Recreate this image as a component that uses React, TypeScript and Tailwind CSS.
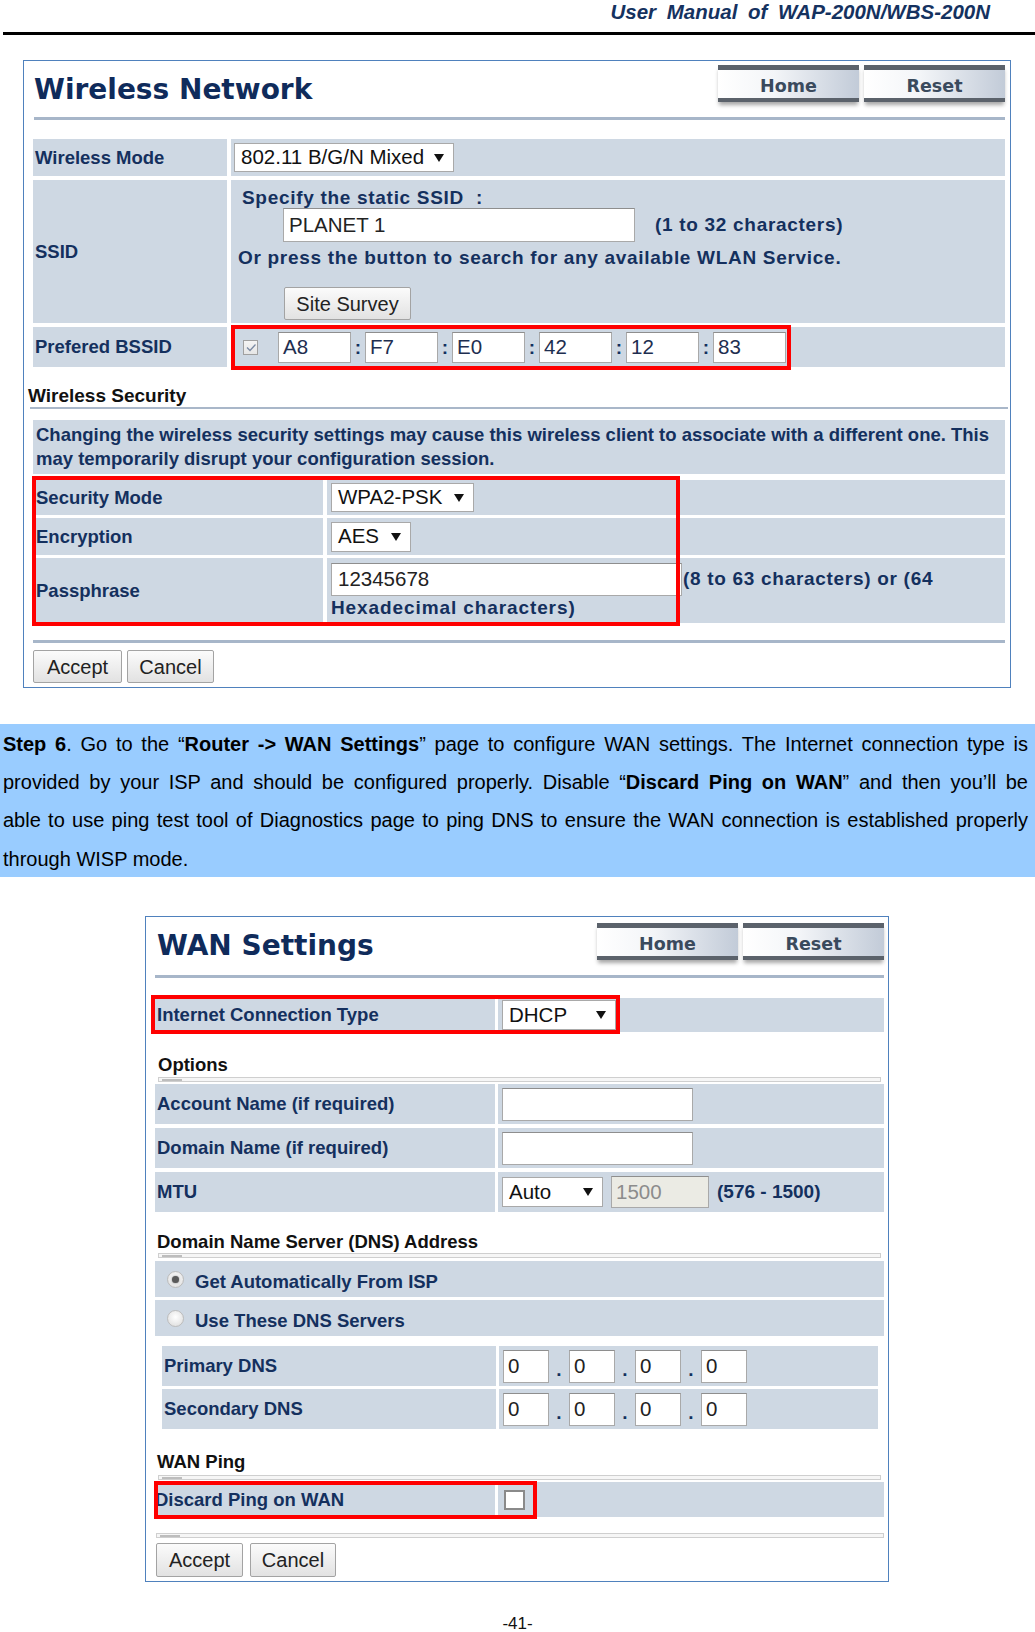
import React, { Fragment } from "react";

const LBL = "font-bold text-[18.5px] text-[#14305e] whitespace-nowrap";
const ROW = "bg-[#ced8e3]";
const INFO = "font-bold text-[19px] tracking-[0.7px] text-[#14305e] whitespace-nowrap";
const HEAD = "font-bold text-[18.5px] leading-[20px] h-[20px] text-[#111] whitespace-nowrap";

function Arrow() {
  return (
    <svg width="10" height="8" viewBox="0 0 10 8" className="shrink-0">
      <polygon points="0,0 10,0 5,8" fill="#111" />
    </svg>
  );
}

function Select({ cls, text }: { cls: string; text: string }) {
  return (
    <div
      className={`${cls} flex items-center justify-between border border-[#a9a9a9] bg-white pl-[6px] pr-[9px] text-[20.5px] leading-none text-[#111]`}
    >
      <span>{text}</span>
      <Arrow />
    </div>
  );
}

function Box({ cls, text, tone }: { cls: string; text?: string; tone?: string }) {
  return (
    <div
      className={`${cls} flex items-center border border-[#a9a9a9] border-t-[#8e8e8e] pl-[4px] text-[20.5px] leading-none whitespace-nowrap ${tone ?? "bg-white text-[#1e2e50]"}`}
    >
      {text}
    </div>
  );
}

function Btn({ cls, text }: { cls: string; text: string }) {
  return (
    <div
      className={`${cls} flex items-center justify-center rounded-[2px] border border-[#a3a3a3] bg-[linear-gradient(#fbfbfb,#e2e2e2)] text-[20px] leading-none text-[#222]`}
    >
      {text}
    </div>
  );
}

function NavBtn({ text }: { text: string }) {
  return (
    <div className="flex h-[37px] w-[141px] flex-col shadow-[0_4px_4px_-1px_rgba(0,0,0,0.35)]">
      <div className="h-[5px] bg-[#5b626b]" />
      <div className="flex-1 bg-[linear-gradient(to_right,#ffffff_0%,#f3f5f8_40%,#c2cbd8_100%)] pt-[5px] text-center font-['DejaVu_Sans',sans-serif] text-[17.5px] font-bold leading-[22px] text-[#3a4a5d]">
        {text}
      </div>
      <div className="h-[4px] bg-[#5b626b]" />
    </div>
  );
}

function Header({ title, tcls }: { title: string; tcls: string }) {
  return (
    <div className="flex h-[37px] justify-between">
      <div
        className={`${tcls} font-['DejaVu_Sans',sans-serif] text-[28px] font-bold leading-[28px] text-[#0f2b5b] whitespace-nowrap`}
      >
        {title}
      </div>
      <div className="flex gap-[5px]">
        <NavBtn text="Home" />
        <NavBtn text="Reset" />
      </div>
    </div>
  );
}

function Check({ checked }: { checked?: boolean }) {
  return (
    <div className="flex h-[15px] w-[15px] items-center justify-center border border-[#a0a0a0] bg-[linear-gradient(#f4f4f4,#e6e6e6)]">
      {checked && (
        <svg width="12" height="11" viewBox="0 0 12 11">
          <path d="M2 5.5 L5 8.5 L10.5 2.5" fill="none" stroke="#7b8aa3" strokeWidth="1.3" />
        </svg>
      )}
    </div>
  );
}

function Radio({ on }: { on?: boolean }) {
  return (
    <div className="flex h-[17px] w-[17px] shrink-0 items-center justify-center rounded-full border border-[#bcbcbc] bg-[radial-gradient(circle_at_50%_40%,#ffffff,#dadada)]">
      {on && <div className="h-[7px] w-[7px] rounded-full bg-[#5a5a5a] shadow-[0_0_2px_#777]" />}
    </div>
  );
}

function Groove({ cls }: { cls: string }) {
  return (
    <div className={`${cls} flex h-[5px] items-end border border-[#cfcfcf] bg-[#f6f6f6] pl-[3px]`}>
      <div className="h-[2px] w-[20px] bg-[#bdbdbd]" />
    </div>
  );
}

function Red({ cls }: { cls: string }) {
  return <div className={`${cls} pointer-events-none absolute border-[4px] border-[#ff0000]`} />;
}

function WirelessPanel() {
  const mac = ["A8", "F7", "E0", "42", "12", "83"];
  return (
    <div className="ml-[23px] mt-[25px] flex w-[988px] flex-col border border-[#4f81bd] pb-[4px] pl-[9px] pr-[5px] pt-[4px]">
      <Header title="Wireless Network" tcls="ml-[1px] mt-[11px]" />
      <div className="ml-[1px] mt-[15px] h-[3px] bg-[#a7b6c9]" />

      {/* Wireless Mode */}
      <div className="mt-[19px] flex h-[37px] gap-[4px]">
        <div className={`${ROW} flex w-[194px] items-center pl-[2px] ${LBL}`}>Wireless Mode</div>
        <div className={`${ROW} flex flex-1 items-center pl-[3px]`}>
          <Select cls="w-[220px] h-[29px]" text="802.11 B/G/N Mixed" />
        </div>
      </div>

      {/* SSID */}
      <div className="mt-[4px] flex h-[143px] gap-[4px]">
        <div className={`${ROW} flex w-[194px] items-center pl-[2px] ${LBL}`}>SSID</div>
        <div className={`${ROW} flex flex-1 flex-col pt-[9px]`}>
          <div className={`pl-[11px] leading-[18px] ${INFO}`}>Specify the static SSID&nbsp; :</div>
          <div className="mt-[1px] flex h-[34px] items-center pl-[52px]">
            <Box cls="w-[352px] h-[34px] pl-[5px]" text="PLANET 1" tone="bg-white text-[#222]" />
            <div className={`ml-[20px] ${INFO}`}>(1 to 32 characters)</div>
          </div>
          <div className={`mt-[7px] pl-[7px] leading-[18px] ${INFO}`}>
            Or press the button to search for any available WLAN Service.
          </div>
          <div className="mt-[20px] pl-[53px]">
            <Btn cls="w-[127px] h-[33px]" text="Site Survey" />
          </div>
        </div>
      </div>

      {/* BSSID */}
      <div className="mt-[4px] flex h-[40px] gap-[4px]">
        <div className={`${ROW} flex w-[194px] items-center pl-[2px] ${LBL}`}>Prefered BSSID</div>
        <div className={`${ROW} relative flex flex-1 items-center pl-[12px]`}>
          <Check checked />
          <div className="ml-[20px] flex items-center">
            {mac.map((m, i) => (
              <Fragment key={m}>
                {i > 0 && (
                  <span className="w-[14px] text-center text-[19px] font-bold leading-none text-[#14305e]">:</span>
                )}
                <Box cls="w-[73px] h-[31px] pl-[4px]" text={m} />
              </Fragment>
            ))}
          </div>
          <Red cls="left-[0px] top-[-2px] w-[560px] h-[45px]" />
        </div>
      </div>

      {/* Wireless Security */}
      <div className={`-ml-[5px] mt-[19px] text-[19px] ${HEAD}`}>Wireless Security</div>
      <div className="-ml-[3px] -mr-[3px] mt-[1px] h-[2px] bg-[#a9b7c9]" />
      <div className={`${ROW} mt-[11px] h-[54px] pl-[3px] pt-[3px] text-[18.5px] font-bold leading-[24px] text-[#14305e]`}>
        <div className="whitespace-nowrap">
          Changing the wireless security settings may cause this wireless client to associate with a different one. This
        </div>
        <div className="whitespace-nowrap">may temporarily disrupt your configuration session.</div>
      </div>

      <div className="relative mt-[6px] flex flex-col gap-[3px]">
        <div className="flex h-[35px] gap-[4px]">
          <div className={`${ROW} flex w-[290px] items-center pl-[3px] ${LBL}`}>Security Mode</div>
          <div className={`${ROW} flex flex-1 items-center pl-[4px]`}>
            <Select cls="w-[143px] h-[29px]" text="WPA2-PSK" />
          </div>
        </div>
        <div className="flex h-[37px] gap-[4px]">
          <div className={`${ROW} flex w-[290px] items-center pl-[3px] ${LBL}`}>Encryption</div>
          <div className={`${ROW} flex flex-1 items-center pl-[4px]`}>
            <Select cls="w-[80px] h-[30px]" text="AES" />
          </div>
        </div>
        <div className="flex h-[65px] gap-[4px]">
          <div className={`${ROW} flex w-[290px] items-center pl-[3px] ${LBL}`}>Passphrase</div>
          <div className={`${ROW} flex flex-1 flex-col pl-[4px] pt-[5px]`}>
            <div className="flex h-[33px] items-center">
              <Box cls="w-[351px] h-[33px] pl-[6px]" text="12345678" tone="bg-white text-[#222]" />
              <div className={`ml-[1px] ${INFO} tracking-[0.4px]`}>(8 to 63 characters) or (64</div>
            </div>
            <div className={`mt-[2px] leading-[20px] ${INFO} tracking-[0.9px]`}>Hexadecimal characters)</div>
          </div>
        </div>
        <Red cls="left-[-1px] top-[-4px] w-[648px] h-[150px]" />
      </div>

      <div className="mt-[17px] h-[3px] bg-[#a7b6c9]" />
      <div className="mt-[7px] flex gap-[5px]">
        <Btn cls="w-[89px] h-[33px]" text="Accept" />
        <Btn cls="w-[87px] h-[33px]" text="Cancel" />
      </div>
    </div>
  );
}

function WanRow({ label, h, children, cls }: { label: string; h: string; children?: React.ReactNode; cls: string }) {
  return (
    <div className={`${cls} ${h} flex gap-[3px]`}>
      <div className={`${ROW} flex w-[340px] items-center pl-[2px] ${LBL}`}>{label}</div>
      <div className={`${ROW} relative flex flex-1 items-center`}>{children}</div>
    </div>
  );
}

function DnsRow({ label, cls }: { label: string; cls: string }) {
  return (
    <div className={`${cls} ml-[7px] mr-[6px] flex h-[40px] gap-[3px]`}>
      <div className={`${ROW} flex w-[334px] items-center pl-[2px] ${LBL}`}>{label}</div>
      <div className={`${ROW} flex flex-1 items-center pl-[4px]`}>
        {[0, 1, 2, 3].map((i) => (
          <Fragment key={i}>
            {i > 0 && (
              <span className="flex h-[33px] w-[20px] items-end justify-center pb-[4px] text-[19px] font-bold leading-none text-[#14305e]">
                .
              </span>
            )}
            <Box cls="w-[46px] h-[33px] pl-[2px]" text="0" tone="bg-white text-[#222]" />
          </Fragment>
        ))}
      </div>
    </div>
  );
}

function WanPanel() {
  return (
    <div className="ml-[145px] mt-[39px] flex w-[744px] flex-col border border-[#4f81bd] pb-[4px] pl-[9px] pr-[4px] pt-[6px]">
      <Header title="WAN Settings" tcls="ml-[2px] mt-[9px]" />
      <div className="mt-[15px] h-[3px] bg-[#a7b6c9]" />

      <WanRow cls="mt-[20px] relative" h="h-[34px]" label="Internet Connection Type">
        <div className="pl-[4px]">
          <Select cls="w-[114px] h-[30px]" text="DHCP" />
        </div>
      </WanRow>

      <div className="relative">
        <Red cls="left-[-4px] top-[-37px] w-[469px] h-[39px]" />
      </div>

      <div className={`ml-[3px] mt-[23px] ${HEAD}`}>Options</div>
      <Groove cls="ml-[3px] mr-[3px] mt-[2px]" />

      <WanRow cls="mt-[2px]" h="h-[40px]" label="Account Name (if required)">
        <div className="pl-[4px]">
          <Box cls="w-[191px] h-[33px]" />
        </div>
      </WanRow>
      <WanRow cls="mt-[4px]" h="h-[40px]" label="Domain Name (if required)">
        <div className="pl-[4px]">
          <Box cls="w-[191px] h-[33px]" />
        </div>
      </WanRow>
      <WanRow cls="mt-[4px]" h="h-[40px]" label="MTU">
        <div className="flex items-center pl-[4px]">
          <Select cls="w-[101px] h-[30px]" text="Auto" />
          <Box cls="ml-[8px] w-[98px] h-[32px] pl-[2px]" text="1500" tone="bg-[#ebebe4] text-[#8c8c8c]" />
          <span className="ml-[8px] text-[19px] font-bold text-[#14305e]">(576 - 1500)</span>
        </div>
      </WanRow>

      <div className={`ml-[2px] mt-[20px] ${HEAD}`}>Domain Name Server (DNS) Address</div>
      <Groove cls="ml-[3px] mr-[3px] mt-[1px]" />

      <div className={`${ROW} mt-[3px] flex h-[36px] items-center pl-[12px]`}>
        <Radio on />
        <span className={`ml-[11px] mt-[5px] ${LBL}`}>Get Automatically From ISP</span>
      </div>
      <div className={`${ROW} mt-[3px] flex h-[36px] items-center pl-[12px]`}>
        <Radio />
        <span className={`ml-[11px] mt-[5px] ${LBL}`}>Use These DNS Servers</span>
      </div>

      <DnsRow cls="mt-[10px]" label="Primary DNS" />
      <DnsRow cls="mt-[3px]" label="Secondary DNS" />

      <div className={`ml-[2px] mt-[23px] ${HEAD}`}>WAN Ping</div>
      <Groove cls="ml-[3px] mr-[3px] mt-[3px]" />

      <div className="relative mt-[2px] flex h-[35px] gap-[3px]">
        <div className={`${ROW} flex w-[340px] items-center ${LBL}`}>Discard Ping on WAN</div>
        <div className={`${ROW} flex flex-1 items-center pl-[6px]`}>
          <div className="h-[20px] w-[21px] border-2 border-[#8a8a8a] bg-white" />
        </div>
        <Red cls="left-[-1px] top-[-1px] w-[383px] h-[38px]" />
      </div>

      <Groove cls="ml-[1px] mt-[16px]" />
      <div className="ml-[1px] mt-[5px] flex gap-[7px]">
        <Btn cls="w-[87px] h-[34px]" text="Accept" />
        <Btn cls="w-[86px] h-[34px]" text="Cancel" />
      </div>
    </div>
  );
}

export default function App() {
  return (
    <div className="relative h-[1632px] w-[1035px] overflow-hidden bg-white font-['Liberation_Sans',Arial,sans-serif]">
      <div className="h-[32px] pr-[45px] text-right">
        <div className="text-[20.5px] font-bold italic leading-[23px] text-[#15325f] [word-spacing:5px]">
          User Manual of WAP-200N/WBS-200N
        </div>
      </div>
      <div className="ml-[3px] h-[3px] bg-black" />

      <WirelessPanel />

      <div className="mt-[36px] h-[153px] bg-[#99ccff] pl-[3px] pr-[7px] pt-[1px] text-[20px] leading-[38.2px] text-black">
        <div className="text-justify [text-align-last:justify]">
          <b>Step 6</b>. Go to the “<b>Router -&gt; WAN Settings</b>” page to configure WAN settings. The Internet connection type is
        </div>
        <div className="text-justify [text-align-last:justify]">
          provided by your ISP and should be configured properly. Disable “<b>Discard Ping on WAN</b>” and then you’ll be
        </div>
        <div className="text-justify [text-align-last:justify]">
          able to use ping test tool of Diagnostics page to ping DNS to ensure the WAN connection is established properly
        </div>
        <div>through WISP mode.</div>
      </div>

      <WanPanel />

      <div className="mt-[33px] text-center text-[17px] leading-[17px] text-[#111]">-41-</div>
    </div>
  );
}
